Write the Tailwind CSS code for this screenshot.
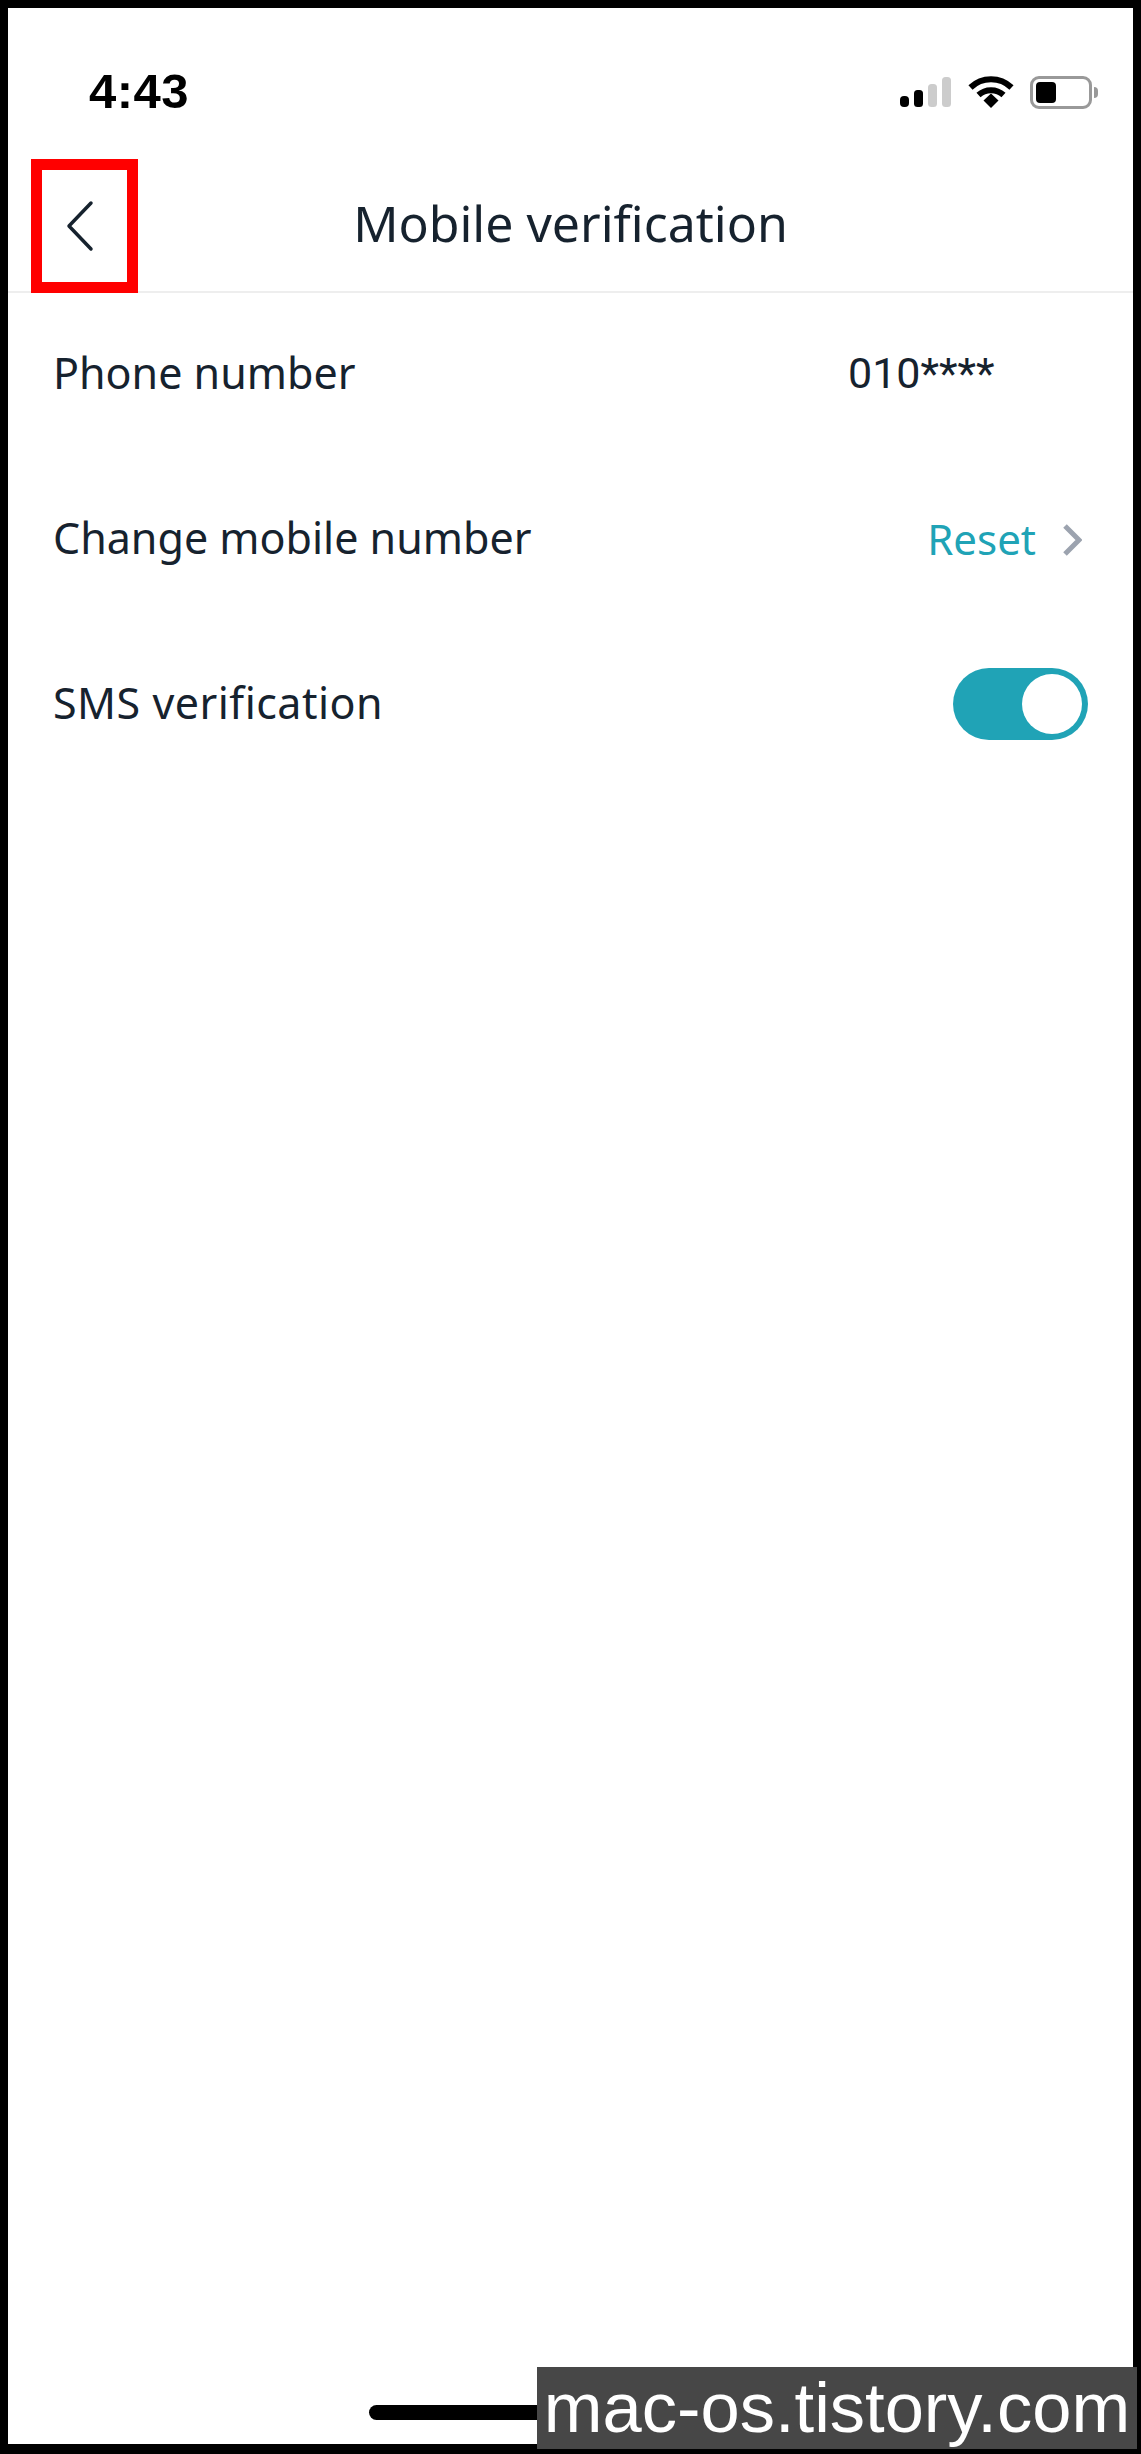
<!DOCTYPE html>
<html lang="en">
<head>
  <meta charset="UTF-8" />
  <title>Mobile verification</title>
  <script src="https://cdn.jsdelivr.net/npm/@tailwindcss/browser@4"></script>
</head>
<body class="relative w-[1141px] h-[2454px] overflow-hidden bg-black pt-2 pl-2 pr-2 pb-[10px] font-['Noto_Sans',sans-serif]">
  <div class="relative h-full flex flex-col bg-white text-[#16222e]">

    <!-- Status bar -->
    <div class="h-[153px] flex items-center justify-between pl-[81px] pr-[35px] pt-[15px] shrink-0">
      <span class="font-['Liberation_Sans',sans-serif] font-bold text-[49px] tracking-[0.5px] text-black">4:43</span>
      <div class="flex items-center">
        <svg width="52" height="30" viewBox="0 0 52 30" class="mr-[16px]">
          <rect x="0" y="19" width="9" height="11" rx="4" fill="#000"/>
          <rect x="14" y="13" width="9" height="17" rx="3.5" fill="#000"/>
          <rect x="28" y="7" width="9" height="23" rx="3.5" fill="#ccc"/>
          <rect x="42" y="0" width="9" height="30" rx="3.5" fill="#ccc"/>
        </svg>
        <svg width="46" height="32" viewBox="0 0 46 32" class="mr-[16px]" fill="none" stroke="#000">
          <path d="M2.5 11.5 C14 0.5 32 0.5 43.500 11.5" stroke-width="6"/>
          <path d="M10.500 19 C17.500 12.500 28.500 12.500 35.500 19" stroke-width="6"/>
          <path d="M15.500 24.500 L23 17.500 L30.500 24.500 L23 32 Z" fill="#000" stroke="none"/>
        </svg>
        <div class="flex items-center">
          <div class="w-[62px] h-[33px] border-[3px] border-[#999] rounded-[9px] p-[3px]">
            <div class="w-[20px] h-full bg-black rounded-[4px]"></div>
          </div>
          <div class="w-[4px] h-[11px] ml-[2px] bg-[#999] rounded-r-full"></div>
        </div>
      </div>
    </div>

    <!-- Header -->
    <div class="relative h-[133px] -mt-[1px] flex items-center justify-center border-b-2 border-[#eeeeee] shrink-0">
      <h1 class="text-[50px] font-normal leading-none pb-[5px]">Mobile verification</h1>
      <div class="absolute left-[23px] -top-[1px] w-[107px] h-[134px] border-[11px] border-[#ff0000] flex items-center">
        <svg width="30" height="52" viewBox="0 0 30 52" class="ml-[23px]" fill="none" stroke="#16222e" stroke-width="3.500" stroke-linecap="round" stroke-linejoin="round">
          <path d="M26 3 L4 26 L26 49"/>
        </svg>
      </div>
    </div>

    <!-- Rows -->
    <div class="flex flex-col -mt-[2px] pl-[45px] text-[43px]">
      <div class="h-[165px] flex items-center justify-between">
        <span>Phone number</span>
        <span class="w-[285px] font-['Roboto',sans-serif]">010****</span>
      </div>
      <div class="h-[165px] flex items-center justify-between pr-[51px]">
        <span>Change mobile number</span>
        <div class="flex items-center">
          <span class="text-[#20a3b6] text-[42px]">Reset</span>
          <svg width="20" height="32" viewBox="0 0 20 32" class="ml-[26px] mt-[2px]" fill="none" stroke="#9ca3af" stroke-width="5">
            <path d="M3 2 L17 16 L3 30"/>
          </svg>
        </div>
      </div>
      <div class="h-[165px] flex items-center justify-between pr-[45px]">
        <span class="tracking-[0.5px]">SMS verification</span>
        <div class="w-[135px] h-[72px] rounded-full bg-[#20a3b6] flex items-center justify-end pr-[6px]">
          <div class="w-[60px] h-[60px] rounded-full bg-white"></div>
        </div>
      </div>
    </div>

    <!-- Home indicator -->
    <div class="absolute left-[361px] bottom-[24px] w-[402px] h-[15px] rounded-full bg-black"></div>
  </div>

  <!-- Watermark -->
  <div class="absolute left-[537px] top-[2367px] w-[600px] h-[82px] bg-[#474747] flex items-center justify-center">
    <span class="font-['Liberation_Sans',sans-serif] text-white text-[70.5px] leading-none">mac-os.tistory.com</span>
  </div>
</body>
</html>
